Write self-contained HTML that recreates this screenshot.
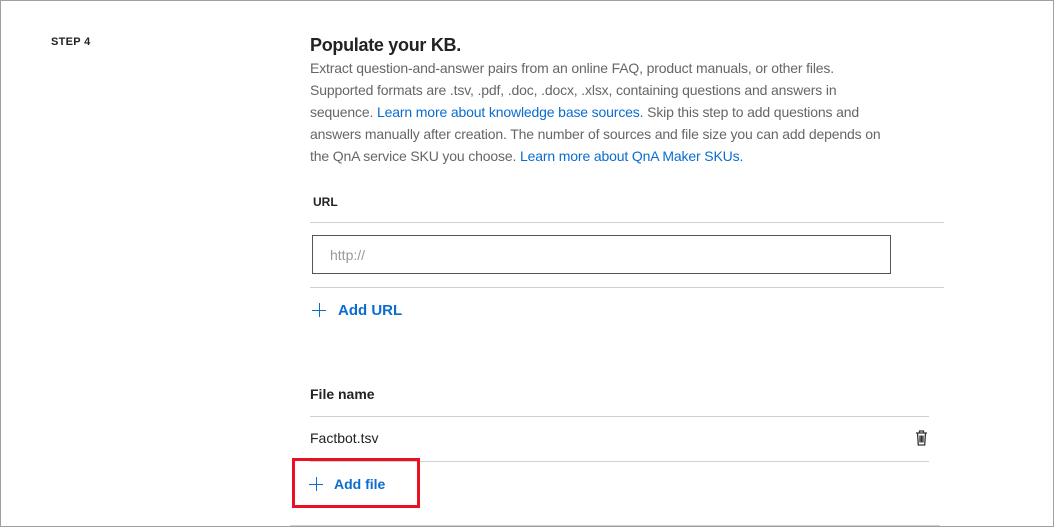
<!DOCTYPE html>
<html><head><style>
body{margin:0;width:1054px;height:527px;background:#fff;font-family:"Liberation Sans",sans-serif;position:relative;overflow:hidden}
.frame{position:absolute;left:0;top:0;width:1052px;height:525px;border:1px solid #a0a0a0}
.a{position:absolute;white-space:nowrap}
.step{left:51px;top:36px;font-size:11px;font-weight:bold;color:#222;letter-spacing:.3px}
h1{position:absolute;left:310px;top:35px;margin:0;font-size:18px;font-weight:bold;color:#222;letter-spacing:-.3px}
.p{left:310px;font-size:14px;color:#666;line-height:22px;letter-spacing:-.15px}
.lk{color:#0b6cd0}
.hr{position:absolute;height:1px;background:#d0d0d0}
.lbl{font-size:12px;font-weight:bold;color:#222}
.blue{color:#0b6cd0;font-size:15px;font-weight:bold}
.pl{position:absolute;background:#0b6cd0}
</style></head><body>
<div class="frame"></div>
<div class="a step">STEP 4</div>
<h1>Populate your KB.</h1>
<div class="a p" style="top:57px">Extract question-and-answer pairs from an online FAQ, product manuals, or other files.<br>Supported formats are .tsv, .pdf, .doc, .docx, .xlsx, containing questions and answers in<br>sequence. <span class="lk">Learn more about knowledge base sources.</span> Skip this step to add questions and<br>answers manually after creation. The number of sources and file size you can add depends on<br>the QnA service SKU you choose. <span class="lk">Learn more about QnA Maker SKUs.</span></div>
<div class="a lbl" style="left:313px;top:195px">URL</div>
<div class="hr" style="left:310px;top:222px;width:634px"></div>
<div class="a" style="left:312px;top:235px;width:577px;height:37px;border:1px solid #555"></div>
<div class="a" style="left:330px;top:247px;font-size:14px;color:#999">http://</div>
<div class="hr" style="left:310px;top:287px;width:634px"></div>
<div class="pl" style="left:312px;top:310px;width:14px;height:1px"></div>
<div class="pl" style="left:319px;top:303px;width:1px;height:14px"></div>
<div class="a blue" style="left:338px;top:302px">Add URL</div>
<div class="a" style="left:310px;top:386px;font-size:14px;font-weight:bold;color:#222">File name</div>
<div class="hr" style="left:310px;top:416px;width:619px"></div>
<div class="a" style="left:310px;top:430px;font-size:14px;color:#222">Factbot.tsv</div>
<svg class="a" style="left:915px;top:430px" width="13" height="16" viewBox="0 0 13 16"><path d="M1 3h11M4.5 3V1h4v2M2.5 3l.8 12h6.4l.8-12M5 5.5v7M6.5 5.5v7M8 5.5v7" fill="none" stroke="#333" stroke-width="1.3"/></svg>
<div class="hr" style="left:310px;top:461px;width:619px"></div>
<div class="a" style="left:292px;top:458px;width:122px;height:44px;border:3px solid #e81123"></div>
<div class="pl" style="left:309px;top:484px;width:14px;height:1px"></div>
<div class="pl" style="left:316px;top:477px;width:1px;height:14px"></div>
<div class="a blue" style="left:334px;top:476px;font-size:14px">Add file</div>
<div class="hr" style="left:290px;top:525px;width:650px"></div>
</body></html>
